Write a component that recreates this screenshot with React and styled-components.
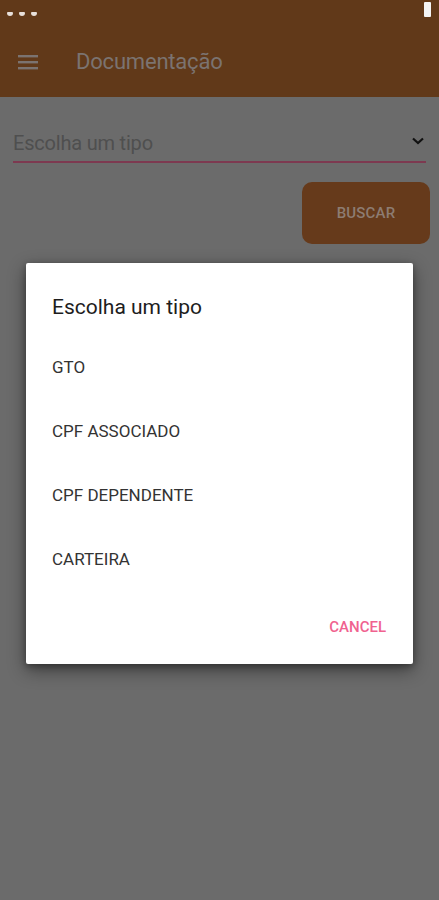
import React from "react";
import styled, { createGlobalStyle } from "styled-components";

const Global = createGlobalStyle`
  html, body { margin: 0; padding: 0; }
  body { background: #6b6b6b; font-family: Roboto, "Liberation Sans", sans-serif; }
  * { box-sizing: border-box; }
`;

const Page = styled.div`
  width: 439px;
  height: 900px;
  background: #6b6b6b;
  position: relative;
  overflow: hidden;
`;

const StatusBar = styled.div`
  height: 24px;
  background: #613919;
  display: flex;
  align-items: center;
  justify-content: space-between;
  padding: 0 8px 0 7px;
`;

const Notifs = styled.div`
  display: flex;
  gap: 6px;
  align-items: center;
  margin-top: 4px;
`;

const NotifDot = styled.span`
  width: 6px;
  height: 4px;
  border-radius: 1px 1px 3px 3px;
  background: #e8e0da;
`;

const Battery = styled.span`
  width: 7px;
  height: 15px;
  background: #f4f4f4;
  border-radius: 1px;
  align-self: flex-start;
  margin-top: 2px;
`;

const AppBar = styled.header`
  height: 73px;
  background: #613919;
  display: flex;
  align-items: center;
  padding: 2px 0 0 18px;
  gap: 38px;
`;

const Title = styled.h1`
  margin: 0;
  font-size: 22px;
  font-weight: 400;
  color: #7b7370;
  letter-spacing: -0.2px;
`;

const Content = styled.main`
  padding: 0 13px 0 13px;
  display: flex;
  flex-direction: column;
`;

const SelectRow = styled.div`
  margin-top: 29px;
  height: 37px;
  display: flex;
  align-items: center;
  justify-content: space-between;
  border-bottom: 2px solid #7d3950;
  padding: 0 0 2px 0;
`;

const Placeholder = styled.span`
  font-size: 20px;
  color: #4f4f4f;
  letter-spacing: -0.2px;
`;

const Chevron = styled.svg`
  margin-right: 2px;
  margin-top: -4px;
`;

const ButtonRow = styled.div`
  display: flex;
  justify-content: flex-end;
  margin-top: 19px;
  margin-right: -4px;
`;

const SearchButton = styled.button`
  width: 128px;
  height: 62px;
  border: none;
  border-radius: 10px;
  background: #663a1b;
  color: #8d7c72;
  font-family: Roboto, "Liberation Sans", sans-serif;
  font-size: 15px;
  font-weight: 500;
  letter-spacing: 0.2px;
`;

const Scrim = styled.div`
  position: absolute;
  inset: 0;
  padding-top: 263px;
  padding-left: 26px;
`;

const Dialog = styled.div`
  width: 387px;
  height: 401px;
  background: #ffffff;
  border-radius: 2px;
  box-shadow: 0 6px 18px rgba(0, 0, 0, 0.45), 0 2px 6px rgba(0, 0, 0, 0.3);
  padding: 22px 27px 19px 26px;
  display: flex;
  flex-direction: column;
`;

const DialogTitle = styled.h2`
  margin: 0;
  height: 44px;
  display: flex;
  align-items: center;
  font-size: 21px;
  font-weight: 400;
  color: #1d1d1d;
`;

const List = styled.ul`
  list-style: none;
  margin: 6px 0 0 0;
  padding: 0;
`;

const Item = styled.li`
  height: 64px;
  display: flex;
  align-items: center;
  font-size: 17px;
  color: #333333;
`;

const Actions = styled.div`
  margin-top: auto;
  display: flex;
  justify-content: flex-end;
`;

const CancelButton = styled.button`
  height: 36px;
  border: none;
  background: transparent;
  padding: 0;
  color: #f0628f;
  font-family: Roboto, "Liberation Sans", sans-serif;
  font-size: 15px;
  font-weight: 500;
`;

const HamburgerIcon = () => (
  <svg width="20" height="16" viewBox="0 0 20 16">
    <rect x="0" y="1" width="20" height="2.4" fill="#7b7370" />
    <rect x="0" y="7" width="20" height="2.4" fill="#7b7370" />
    <rect x="0" y="13" width="20" height="2.4" fill="#7b7370" />
  </svg>
);

const options = ["GTO", "CPF ASSOCIADO", "CPF DEPENDENTE", "CARTEIRA"];

export default function App() {
  return (
    <>
      <Global />
      <Page>
        <StatusBar>
          <Notifs>
            <NotifDot />
            <NotifDot />
            <NotifDot />
          </Notifs>
          <Battery />
        </StatusBar>
        <AppBar>
          <HamburgerIcon />
          <Title>Documentação</Title>
        </AppBar>
        <Content>
          <SelectRow>
            <Placeholder>Escolha um tipo</Placeholder>
            <Chevron width="12" height="8" viewBox="0 0 12 8">
              <path d="M1 1.5 L6 6 L11 1.5" stroke="#111" strokeWidth="2.2" fill="none" />
            </Chevron>
          </SelectRow>
          <ButtonRow>
            <SearchButton>BUSCAR</SearchButton>
          </ButtonRow>
        </Content>
        <Scrim>
          <Dialog>
            <DialogTitle>Escolha um tipo</DialogTitle>
            <List>
              {options.map((o) => (
                <Item key={o}>{o}</Item>
              ))}
            </List>
            <Actions>
              <CancelButton>CANCEL</CancelButton>
            </Actions>
          </Dialog>
        </Scrim>
      </Page>
    </>
  );
}
